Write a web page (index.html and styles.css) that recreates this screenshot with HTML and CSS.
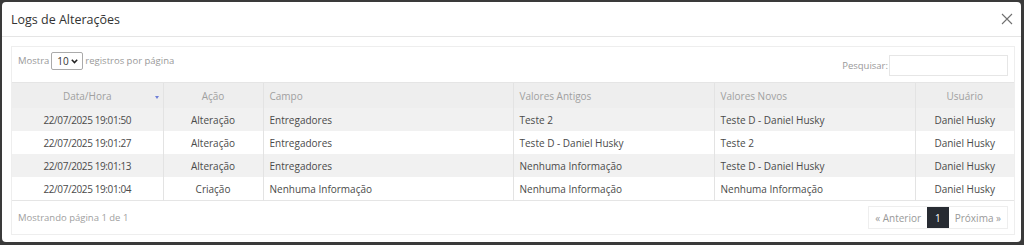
FILE: index.html
```html
<!DOCTYPE html>
<html lang="pt-BR">

<head>
  <meta charset="UTF-8">
  <meta name="viewport" content="width=device-width, initial-scale=1.0">
  <title>Logs de Alterações</title>
  <link rel="stylesheet" href="styles.css">
</head>

<body>
  <div class="modal">
    <div class="modal-header">
      <h4 class="modal-title">Logs de Alterações</h4>
      <button class="close-btn" aria-label="Fechar">
        <svg width="12" height="12" viewBox="0 0 12 12">
          <path d="M1 1 L11 11 M11 1 L1 11" stroke="#707070" stroke-width="1.1" fill="none" />
        </svg>
      </button>
    </div>

    <div class="modal-body">
      <div class="panel">
        <div class="toolbar">
          <label class="length">
            Mostra
            <span class="select-wrap">
              <select>
                <option>10</option>
                <option>25</option>
                <option>50</option>
              </select>
              <svg class="chevron" width="7" height="5" viewBox="0 0 7 5">
                <path d="M0.8 0.8 L3.5 3.6 L6.2 0.8" stroke="#222" stroke-width="1.5" fill="none" />
              </svg>
            </span>
            registros por página
          </label>
          <label class="search">
            Pesquisar:
            <input type="text">
          </label>
        </div>

        <table class="logs">
          <colgroup>
            <col style="width: 151px">
            <col style="width: 100px">
            <col style="width: 250px">
            <col style="width: 201px">
            <col style="width: 201px">
            <col>
          </colgroup>
          <thead>
            <tr>
              <th class="center">Data/Hora<span class="sort-arrow"></span></th>
              <th class="center">Ação</th>
              <th>Campo</th>
              <th>Valores Antigos</th>
              <th>Valores Novos</th>
              <th class="center">Usuário</th>
            </tr>
          </thead>
          <tbody id="logsBody"></tbody>
        </table>

        <div class="footer">
          <span class="info">Mostrando página 1 de 1</span>
          <div class="pagination">
            <a class="page-btn">« Anterior</a>
            <a class="page-btn active">1</a>
            <a class="page-btn">Próxima »</a>
          </div>
        </div>
      </div>
    </div>
  </div>

  <script>
    const logs = [
      ['22/07/2025 19:01:50', 'Alteração', 'Entregadores', 'Teste 2', 'Teste D - Daniel Husky', 'Daniel Husky'],
      ['22/07/2025 19:01:27', 'Alteração', 'Entregadores', 'Teste D - Daniel Husky', 'Teste 2', 'Daniel Husky'],
      ['22/07/2025 19:01:13', 'Alteração', 'Entregadores', 'Nenhuma Informação', 'Teste D - Daniel Husky', 'Daniel Husky'],
      ['22/07/2025 19:01:04', 'Criação', 'Nenhuma Informação', 'Nenhuma Informação', 'Nenhuma Informação', 'Daniel Husky']
    ];

    const logsBody = document.getElementById('logsBody');
    logs.forEach(log => {
      const row = logsBody.insertRow();
      log.forEach((value, i) => {
        const cell = row.insertCell(i);
        cell.textContent = value;
        if (i === 0) cell.classList.add('date');
        if (i === 0 || i === 1 || i === 5) cell.classList.add('center');
      });
    });
  </script>
</body>

</html>
```

FILE: styles.css
```css
body {
  font-family: 'Open Sans', sans-serif;
  margin: 0;
  padding: 2px 3px 3px 2px;
  background-color: #3a3a3a;
  height: 245px;
  box-sizing: border-box;
}

.modal {
  background-color: white;
  border-radius: 4px;
  height: 240px;
  display: flex;
  flex-direction: column;
}

.modal-header {
  display: flex;
  align-items: center;
  justify-content: space-between;
  height: 34px;
  padding: 0 7px 0 9px;
  border-bottom: 1px solid #e5e5e5;
}

.modal-title {
  margin: 0;
  font-size: 12.5px;
  font-weight: normal;
  color: #333;
}

.close-btn {
  background: none;
  border: none;
  padding: 0;
  width: 14px;
  height: 14px;
  display: flex;
  align-items: center;
  justify-content: center;
}

.modal-body {
  padding: 9px 6px 7px 9px;
  flex: 1;
  display: flex;
}

.panel {
  flex: 1;
  border: 1px solid #eee;
  display: flex;
  flex-direction: column;
}

.toolbar {
  display: flex;
  justify-content: space-between;
  align-items: center;
  height: 35px;
  padding: 0 6px;
  font-size: 9.5px;
  color: #999;
}

.length {
  display: flex;
  align-items: center;
  gap: 2px;
  margin-top: -8px;
}

.select-wrap {
  position: relative;
  display: inline-block;
}

.select-wrap select {
  appearance: none;
  -webkit-appearance: none;
  font-family: inherit;
  font-size: 10px;
  color: #333;
  height: 18px;
  width: 32px;
  border: 1px solid #aaa;
  border-radius: 2px;
  background: white;
  padding: 0 0 0 5px;
  display: block;
}

.chevron {
  position: absolute;
  right: 5px;
  top: 7px;
  pointer-events: none;
}

.search {
  display: flex;
  align-items: center;
  gap: 1px;
  margin-top: 2px;
}

.search input {
  width: 119px;
  height: 21px;
  box-sizing: border-box;
  border: 1px solid #e6e6e6;
}

.logs {
  width: 100%;
  table-layout: fixed;
  border-collapse: collapse;
  font-size: 10px;
  color: #4a4a4a;
}

.logs th,
.logs td {
  text-align: left;
  padding: 0 6px;
  border-left: 1px solid #e3e3e3;
  white-space: nowrap;
}

.logs th:first-child,
.logs td:first-child {
  border-left: none;
}

.logs th {
  height: 25px;
  background-color: #eeeeee;
  color: #a0a0a0;
  font-weight: normal;
  border-top: 1px solid #e5e5e5;
  position: relative;
}

.logs td {
  height: 23px;
}

.logs td.date {
  letter-spacing: -0.4px;
}

.logs tbody tr:nth-child(odd) {
  background-color: #f1f1f1;
}

.logs tbody tr:last-child {
  border-bottom: 1px solid #e5e5e5;
}

.logs .center {
  text-align: center;
}

.sort-arrow {
  position: absolute;
  right: 4px;
  top: 13px;
  width: 0;
  height: 0;
  border-left: 2.5px solid transparent;
  border-right: 2.5px solid transparent;
  border-top: 3.5px solid #6f7fd8;
}

.footer {
  display: flex;
  justify-content: space-between;
  align-items: center;
  flex: 1;
  padding: 0 6px;
  font-size: 9.5px;
  color: #a0a0a0;
}

.pagination {
  display: flex;
  border: 1px solid #eee;
  height: 23px;
  box-sizing: border-box;
}

.page-btn {
  display: flex;
  align-items: center;
  padding: 0 6px;
  color: #999;
  font-size: 10px;
}

.page-btn.active {
  background-color: #272b32;
  color: white;
  padding: 0 8px;
}
```
